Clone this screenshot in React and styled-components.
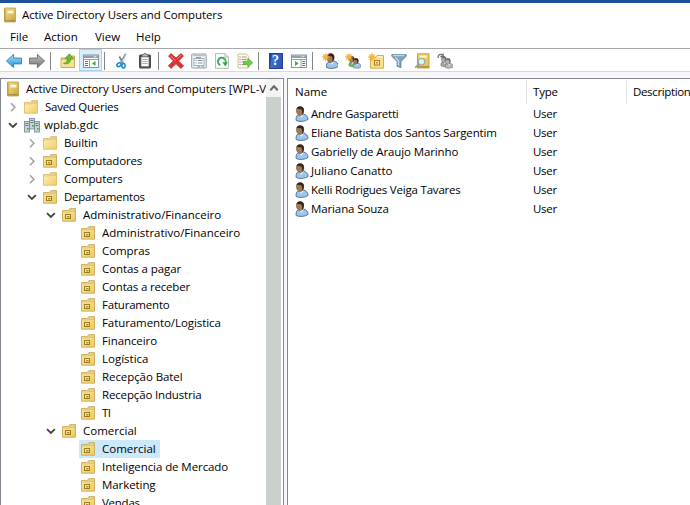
import React from 'react';
import styled, { createGlobalStyle, css } from 'styled-components';

const GlobalStyle = createGlobalStyle`
  * { box-sizing: border-box; }
  html, body { margin: 0; overflow: hidden; background: #fff; }
`;

const Window = styled.div`
  display: flex;
  flex-direction: column;
  width: 690px;
  height: 505px;
  overflow: hidden;
  background: #f7f7f9;
  border-top: 3px solid #1d519b;
  color: #000;
  font: 11.5px/18px 'Open Sans', 'Noto Sans', sans-serif;
  white-space: nowrap;
`;

const TitleBar = styled.header`
  display: flex;
  align-items: center;
  gap: 6px;
  flex: none;
  height: 24px;
  padding-left: 4px;
  background: #fff;
`;

const MenuBar = styled.nav`
  display: flex;
  flex: none;
  height: 21px;
  padding-left: 10px;
  line-height: 20px;
  background: #fff;
`;

const MenuItem = styled.span`
  flex: none;
  width: ${(p) => p.$width}px;
`;

const Toolbar = styled.div`
  display: flex;
  flex: none;
  height: 24px;
  padding-left: 2px;
  border-top: 1px solid #a5a9ab;
  border-bottom: 1px solid #d6dade;
  background: #fff;
`;

const ToolButton = styled.span`
  display: flex;
  align-items: center;
  justify-content: center;
  flex: none;
  width: 23px;
  height: 22px;
  padding-top: 2px;
  ${(p) =>
    p.$active &&
    css`
      background: #d9edfb;
      border: 1px solid #a5d3f1;
    `}
`;

const Separator = styled.span`
  flex: none;
  width: 1px;
  height: 18px;
  margin: 3px 5px 0 2px;
  background: #858585;
`;

const Panes = styled.main`
  display: flex;
  gap: 3px;
  flex: 1;
  min-height: 0;
  padding-top: 6px;
`;

const Pane = styled.section`
  display: flex;
  flex: ${(p) => (p.$width ? 'none' : '1')};
  width: ${(p) => (p.$width ? `${p.$width}px` : 'auto')};
  min-width: 0;
  overflow: hidden;
  background: #fff;
  border: 1px solid #828790;
  border-width: ${(p) => (p.$width ? '1px 1px 0 1px' : '1px 0 0 1px')};
`;

const Tree = styled.div`
  flex: 1;
  min-width: 0;
  overflow: hidden;
  padding-top: 1px;
`;

const TreeRow = styled.div`
  display: flex;
  align-items: center;
  height: 18px;
  padding-left: ${(p) => p.$indent}px;
`;

const Toggle = styled.span`
  display: flex;
  flex: none;
  width: 14px;
`;

const Node = styled.span`
  display: flex;
  align-items: center;
  flex: none;
  gap: ${(p) => p.$gap}px;
  height: 18px;
  padding: 0 4px 0 2px;
  background: ${(p) => (p.$selected ? '#cce8fb' : 'transparent')};
`;

const Text = styled.span`
  letter-spacing: ${(p) => p.$track ?? -0.08}px;
`;

const ScrollBar = styled.div`
  display: flex;
  flex-direction: column;
  flex: none;
  width: 17px;
  padding-right: 2px;
`;

const ScrollArrow = styled.div`
  display: flex;
  align-items: center;
  justify-content: center;
  height: 18px;
  background: #f3f3f3;
`;

const ScrollThumb = styled.div`
  flex: 1;
  background: #cbd0cd;
`;

const List = styled.div`
  flex: 1;
  min-width: 0;
`;

const HeaderRow = styled.div`
  display: grid;
  grid-template-columns: 239px 100px 120px;
  height: 25px;
  padding-top: 1px;
`;

const HeaderCell = styled.div`
  height: 24px;
  padding-left: ${(p) => p.$pad || 6}px;
  line-height: 24px;
  letter-spacing: ${(p) => p.$track || 0}px;
  border-right: 1px solid #e2e2e2;
`;

const ListRow = styled.div`
  display: grid;
  grid-template-columns: 239px 100px;
  height: 19px;
`;

const NameCell = styled.div`
  display: flex;
  align-items: center;
  gap: 2px;
  padding-left: 7px;
`;

const Cell = styled.div`
  padding-left: 6px;
  line-height: 19px;
  letter-spacing: -0.3px;
`;

const Icon = ({ w = 16, h = 16, children }) => (
  <svg width={w} height={h} viewBox={`0 0 ${w} ${h}`}>{children}</svg>
);

const ConsoleIcon = () => (
  <Icon w={12} h={16}>
    <defs>
      <linearGradient id="book" x1="0" y1="0" x2="1" y2="1">
        <stop offset="0" stopColor="#f6e08a" />
        <stop offset="1" stopColor="#c9a43c" />
      </linearGradient>
    </defs>
    <rect x=".4" y="1" width="11.200" height="14" rx=".6" fill="url(#book)" stroke="#b3923a" strokeWidth=".7" />
    <path d="M1 1.400v13.200" stroke="#a5842c" strokeWidth=".8" />
    <rect x="3.200" y="3.400" width="6.400" height="3.200" fill="#fffbe4" stroke="#e3ca70" strokeWidth=".5" />
    <path d="M1.500 13.700h9.500" stroke="#96782a" strokeWidth=".8" />
  </Icon>
);

const FolderIcon = ({ unit }) => (
  <Icon w={14} h={14}>
    <defs>
      <linearGradient id="folder" x1="0" y1="0" x2="1" y2="1">
        <stop offset="0" stopColor="#fff2bd" />
        <stop offset="1" stopColor="#f0cd68" />
      </linearGradient>
      <linearGradient id="unitFolder" x1="0" y1="0" x2="1" y2="1">
        <stop offset="0" stopColor="#fbe9a4" />
        <stop offset="1" stopColor="#ecc95f" />
      </linearGradient>
    </defs>
    <path
      d="M.5 2.500h5.800L7.800.6h5.700v12.600H.5z"
      fill={unit ? 'url(#unitFolder)' : 'url(#folder)'}
      stroke={unit ? '#c6a34b' : '#dcb85a'}
      strokeWidth=".8"
    />
    <path d="M7.900 1.500h4.800v1.200H7.900z" fill="#fffdf2" stroke="#b99f58" strokeWidth=".4" />
    <path d="M.6 3.900h6.200l1.300-.8h5" fill="none" stroke="#cba64c" strokeWidth=".5" />
    {unit && (
      <g>
        <rect x="3.500" y="6.500" width="5" height="4" fill="#f9e5a0" stroke="#9c7b22" />
        <path d="M5 8h2.500v1.500H5z" fill="#b3902f" />
      </g>
    )}
  </Icon>
);

const DomainIcon = () => (
  <Icon w={16} h={15}>
    {[[5.5, 0], [0.5, 3], [10.5, 3]].map(([x, y]) => (
      <g key={x}>
        <rect x={x} y={y + 0.5} width="5" height="10.500" fill="#c7d3d9" stroke="#71838f" strokeWidth=".8" />
        <path d={`M${x + 1} ${y + 2.5}h3M${x + 1} ${y + 4.5}h3`} stroke="#536874" strokeWidth=".8" />
        <rect x={x + 2.500} y={y + 7} width="1.800" height="1.800" fill="#45b944" />
      </g>
    ))}
  </Icon>
);

const Person = ({
  x = 0, y = 0, s = 1,
  body = '#9cc6ea', line = '#44688c', skin = '#a27a58', hair = '#33261f',
}) => (
  <g transform={`translate(${x} ${y}) scale(${s})`}>
    <path d="M1.200 14.500c-.5-2.700.2-5 2.300-5.700l5-.8c2.800.6 4.500 2.800 4.600 5.300-2.600 2.300-9 2.800-11.900 1.200z" fill={body} stroke={line} strokeWidth=".9" />
    <path d="M4.200 8.800l2.200 2.900L8.800 8.400z" fill="#edf6fd" />
    <path d="M1.400 4.500c0-2.600 1.500-3.900 3.700-3.900 2.500 0 3.700 1.600 3.500 4.300-.1 2.700-1.400 4.600-3.200 4.600-2.300 0-4-2.200-4-5z" fill={skin} stroke="#5d4230" strokeWidth=".5" />
    <path d="M1.600 2.800C2.200 1 3.800.3 5.500.4 8.400.6 9.300 2.800 8.800 5.500 8.500 7.200 8 8.200 7.100 8.800c.3-2.200.2-4.200-.9-5.600-1.500.2-3-.3-4.600-.4z" fill={hair} />
  </g>
);

const UserIcon = () => <Icon w={14} h={16}><Person /></Icon>;

const Chevron = ({ open }) => (
  <Icon w={10} h={10}>
    {open
      ? <path d="M1 3.200l3.900 3.700 3.900-3.700" fill="none" stroke="#424242" strokeWidth="1.800" />
      : <path d="M3 1.200l3.900 4L3 9.200" fill="none" stroke="#a0a0a0" strokeWidth="1.500" />}
  </Icon>
);

const Arrow = ({ back }) => (
  <Icon>
    <defs>
      <linearGradient id={back ? 'arrowBack' : 'arrowForward'} x1="0" y1="0" x2="0" y2="1">
        <stop offset="0" stopColor={back ? '#b4e2fa' : '#c2c2c2'} />
        <stop offset="1" stopColor={back ? '#1691d8' : '#747474'} />
      </linearGradient>
    </defs>
    <path
      d={back ? 'M.4 8l7.200-6.600v3.700h8v5.800h-8v3.700z' : 'M15.600 8L8.400 1.400v3.700h-8v5.800h8v3.700z'}
      fill={back ? 'url(#arrowBack)' : 'url(#arrowForward)'}
      stroke={back ? '#2b7fb4' : '#666'}
      strokeWidth=".9"
    />
  </Icon>
);

const UpFolderIcon = () => (
  <Icon>
    <path d="M1 5h5l1.500-2h7v11.500H1z" fill="#eecb66" stroke="#c39a38" strokeWidth=".8" />
    <path d="M1.400 7h12.700v7H1.400z" fill="#f7e194" />
    <path d="M3.500 10.500c2.700-.4 3.900-2 4-4.700H5L9.400.8l4 5h-2.700c0 3.700-2.500 5.900-7.200 4.700z" fill="#69bd35" stroke="#3c8c20" strokeWidth=".6" />
  </Icon>
);

const PaneIcon = ({ flip }) => (
  <Icon>
    <rect x=".5" y="2" width="15" height="12.500" fill="#fff" stroke="#788b98" strokeWidth=".9" />
    <path d="M1 2.500h14v2.500H1z" fill="#8fa2ae" />
    <path d="M10.500 3.700h3.500" stroke="#fff" strokeDasharray="1 .7" />
    <path d={flip ? 'M1 6.500h14M10 6.500v8' : 'M1 6.500h14M6.500 6.500v8'} stroke="#788b98" strokeWidth=".8" />
    <path d={flip ? 'M11.300 8.500h3M11.300 10.500h3M11.300 12.500h3' : 'M2 8.500h3M2 10.500h3M2 12.500h3'} stroke="#4e7694" />
    <path d={flip ? 'M4 8l3.600 2.500L4 13z' : 'M12.500 8L9 10.500l3.500 2.500z'} fill="#35ae35" />
  </Icon>
);

const CutIcon = () => (
  <Icon>
    <path d="M11.800.8L7 9.500M5.300 3.500L9 10" stroke="#70899b" strokeWidth="1.800" />
    <path d="M12.200 1L7.700 9" stroke="#d5e2e9" strokeWidth=".7" />
    <ellipse cx="5" cy="11.700" rx="2.300" ry="1.700" transform="rotate(-35 5 11.700)" fill="none" stroke="#1786cb" strokeWidth="1.500" />
    <ellipse cx="9.500" cy="12.700" rx="1.600" ry="2.200" fill="none" stroke="#1786cb" strokeWidth="1.500" />
  </Icon>
);

const PasteIcon = () => (
  <Icon>
    <rect x="2.500" y="2" width="11" height="13" rx=".6" fill="#555" stroke="#4a4a4a" />
    <path d="M4.300 4h7.400v9.300H4.300z" fill="#fafafa" />
    <path d="M5.300 6.500h5.400M5.300 8.500h5.400M5.300 10.500h5.400" stroke="#aaa" />
    <path d="M5 3.800V1.700h1.500L7 .6h2l.6 1.100H11v2.100z" fill="#bdbdbd" stroke="#555" strokeWidth=".7" />
  </Icon>
);

const DeleteIcon = () => (
  <Icon>
    <path d="M.5 3L3 .6l5 4.300L13 .6 15.500 3l-4.900 4.900 5 5-2.700 2.500L8 10.800l-5 4.600-2.600-2.700 5-4.800z" fill="#dc3432" stroke="#b52423" strokeWidth=".7" />
    <path d="M2.300 2.800l5.500 4.800M13 2.200L9 6" stroke="#f59086" strokeWidth=".9" />
  </Icon>
);

const PropertiesIcon = () => (
  <Icon>
    <rect x=".7" y="1" width="14.500" height="14" rx=".8" fill="#f3f5f6" stroke="#88949c" strokeWidth=".9" />
    <path d="M2 2.700h12" stroke="#a6b2ba" />
    <rect x="3" y="5.500" width="10" height="7" fill="#fff" stroke="#8d9ba5" strokeWidth=".8" />
    <path d="M5 4.500h5" stroke="#8d9ba5" />
    <path d="M4.500 7.500h1M4.500 10h1" stroke="#3c96cb" strokeWidth="1.200" />
    <path d="M6.700 7.500h5M6.700 10h5" stroke="#8796a0" />
    <path d="M6.500 13.800h2.500" stroke="#43b4df" />
    <path d="M10.500 13.800h2.500" stroke="#8796a0" />
  </Icon>
);

const RefreshIcon = () => (
  <Icon>
    <path d="M1.500.6h9.600l3.300 3.300v11.500H1.500z" fill="#fbfcfb" stroke="#a7a99a" strokeWidth=".8" />
    <path d="M11 .8v3.300h3.200" fill="#e0dfca" stroke="#9c9f8d" strokeWidth=".6" />
    <path d="M6.300 12.200a3.900 3.900 0 1 1 5.200-2.200" fill="none" stroke="#43ae62" strokeWidth="2" />
    <path d="M8.300 9.200h5.600l-2.500 4.300z" fill="#36a253" />
  </Icon>
);

const ExportIcon = () => (
  <Icon>
    <path d="M1 1h8.500l2.200 2.300V15H1z" fill="#fffdec" stroke="#c2b583" strokeWidth=".8" />
    <path d="M2.500 4h1M2.500 6.500h1M2.500 9h1M2.500 11.500h1" stroke="#666" />
    <path d="M4.700 4h5M4.700 6.500h5M4.700 9h3M4.700 11.500h4" stroke="#a69e78" />
    <path d="M6.500 8.200h4.300V5.300l5 4.500-5 4.500v-2.800H6.500z" fill="#6ecb48" stroke="#4aa030" strokeWidth=".6" />
  </Icon>
);

const HelpBox = styled.span`
  width: 14px;
  height: 16px;
  background: linear-gradient(100deg, #234dae 0 12%, #4272cf 20%, #2854ba);
  border: 1px solid #203f91;
  color: #fff;
  font: bold 14px/14px 'Liberation Serif', serif;
  text-align: center;
`;

const Spark = ({ x = 4.5, y = 4 }) => (
  <path
    transform={`translate(${x} ${y})`}
    d="M0-4L.9-1.500 3.200-3 1.700-.7 4.200.2 1.700.9 2.900 3.200.7 1.700-.2 4.200-.9 1.700-3 3l1.300-2.300L-4.200 0l2.500-.9L-3-3l2.200 1.400z"
    fill="#f8b637"
    stroke="#e49a28"
    strokeWidth=".3"
  />
);

const NewUserIcon = () => (
  <Icon><Person x={3.4} s={1} /><Spark x={3.8} /></Icon>
);

const NewGroupIcon = () => (
  <Icon>
    <Person x={3.2} y={3} s={0.68} body="#75ba65" line="#41783c" />
    <Person x={7.6} y={5} s={0.66} />
    <Spark x={4} />
  </Icon>
);

const NewUnitIcon = () => (
  <Icon>
    <path d="M2.500 4.500h5l1.500-2h6.500v12.700h-13z" fill="#f8df8e" stroke="#cfa743" strokeWidth=".9" />
    <path d="M9.500 3.800h5" stroke="#fffaea" />
    <rect x="6.500" y="7.500" width="5" height="4.500" fill="#fae7a3" stroke="#a37e20" />
    <path d="M8 9h2v1.500H8z" fill="#b98d24" />
    <Spark x={4} />
  </Icon>
);

const FilterIcon = () => (
  <Icon>
    <path d="M.8 1.700h14.400v1.600L9.900 8.500v6.200l-3.800-1.500V8.500L.8 3.300z" fill="#7ea4bd" stroke="#4f7691" strokeWidth=".8" />
    <path d="M2 2.700h11.500" stroke="#d3e5ef" />
    <path d="M4.500 4.500L7.500 8v4.500" fill="none" stroke="#c7dfed" strokeWidth="1.300" />
  </Icon>
);

const FindIcon = () => (
  <Icon>
    <rect x="3.500" y=".8" width="11.500" height="14.200" fill="#e9ca5c" stroke="#b5963c" strokeWidth=".8" />
    <path d="M5.500 2.500h7.500v2.300H5.500z" fill="#fff4c4" />
    <path d="M4 13.900h11" stroke="#9b7719" />
    <circle cx="7.500" cy="8.700" r="3.300" fill="#e0f1f7" stroke="#8b9fa8" />
    <path d="M5 11.300L1.200 14.600" stroke="#9a9a8a" strokeWidth="1.800" />
  </Icon>
);

const MembersIcon = () => (
  <Icon>
    <Person x={3.2} y={3} s={0.68} body="#a4a4a4" line="#666" skin="#aaa" hair="#707070" />
    <Person x={7.6} y={5} s={0.66} body="#b9b9b9" line="#666" skin="#b4b4b4" hair="#707070" />
    <path d="M1.200 5C.7 1.700 3.500.2 5.700 2.200M6.200.4v3H3.300" fill="none" stroke="#6d6d6d" strokeWidth="1.200" />
  </Icon>
);

const TOOL_GROUPS = [
  [<Arrow back />, <Arrow />],
  [<UpFolderIcon />, <PaneIcon />],
  [<CutIcon />, <PasteIcon />],
  [<DeleteIcon />, <PropertiesIcon />, <RefreshIcon />, <ExportIcon />],
  [<HelpBox>?</HelpBox>, <PaneIcon flip />],
  [<NewUserIcon />, <NewGroupIcon />, <NewUnitIcon />, <FilterIcon />, <FindIcon />, <MembersIcon />],
];

const TREE = [
  { label: 'Saved Queries', depth: 0, open: false, kind: 'folder', track: -0.26 },
  { label: 'wplab.gdc', depth: 0, open: true, kind: 'domain', track: 0.05 },
  { label: 'Builtin', depth: 1, open: false, kind: 'folder' },
  { label: 'Computadores', depth: 1, open: false, track: -0.15 },
  { label: 'Computers', depth: 1, open: false, kind: 'folder', track: -0.12 },
  { label: 'Departamentos', depth: 1, open: true, track: -0.25 },
  { label: 'Administrativo/Financeiro', depth: 2, open: true, track: 0 },
  { label: 'Administrativo/Financeiro', depth: 3, track: 0 },
  { label: 'Compras', depth: 3 },
  { label: 'Contas a pagar', depth: 3 },
  { label: 'Contas a receber', depth: 3, track: -0.18 },
  { label: 'Faturamento', depth: 3, track: -0.2 },
  { label: 'Faturamento/Logistica', depth: 3 },
  { label: 'Financeiro', depth: 3 },
  { label: 'Logística', depth: 3, track: 0 },
  { label: 'Recepção Batel', depth: 3 },
  { label: 'Recepção Industria', depth: 3, track: -0.15 },
  { label: 'TI', depth: 3, track: -0.5 },
  { label: 'Comercial', depth: 2, open: true, track: 0 },
  { label: 'Comercial', depth: 3, selected: true, track: 0 },
  { label: 'Inteligencia de Mercado', depth: 3 },
  { label: 'Marketing', depth: 3 },
  { label: 'Vendas', depth: 3, track: -0.25 },
];

const USERS = [
  { name: 'Andre Gasparetti', track: -0.25 },
  { name: 'Eliane Batista dos Santos Sargentim', track: -0.16 },
  { name: 'Gabrielly de Araujo Marinho', track: -0.12 },
  { name: 'Juliano Canatto', track: 0 },
  { name: 'Kelli Rodrigues Veiga Tavares', track: -0.2 },
  { name: 'Mariana Souza', track: -0.12 },
];

const nodeIcon = (kind) =>
  kind === 'domain' ? <DomainIcon /> : <FolderIcon unit={kind !== 'folder'} />;

export default function App() {
  return (
    <Window>
      <GlobalStyle />
      <TitleBar>
        <ConsoleIcon />
        <Text $track={-0.1}>Active Directory Users and Computers</Text>
      </TitleBar>
      <MenuBar>
        <MenuItem $width={34}>File</MenuItem>
        <MenuItem $width={51}>Action</MenuItem>
        <MenuItem $width={41}>View</MenuItem>
        <MenuItem $width={40}>Help</MenuItem>
      </MenuBar>
      <Toolbar>
        {TOOL_GROUPS.map((group, g) => (
          <React.Fragment key={g}>
            {g > 0 && <Separator />}
            {group.map((icon, i) => (
              <ToolButton key={i} $active={g === 1 && i === 1}>{icon}</ToolButton>
            ))}
          </React.Fragment>
        ))}
      </Toolbar>
      <Panes>
        <Pane $width={284}>
          <Tree>
            <TreeRow $indent={4}>
              <Node $gap={7}>
                <ConsoleIcon />
                <Text $track={-0.11}>Active Directory Users and Computers [WPL-V</Text>
              </Node>
            </TreeRow>
            {TREE.map((n, i) => (
              <TreeRow key={i} $indent={7 + n.depth * 19}>
                <Toggle>{n.open !== undefined && <Chevron open={n.open} />}</Toggle>
                <Node $selected={n.selected} $gap={n.kind === 'domain' ? 4 : 7}>
                  {nodeIcon(n.kind)}
                  <Text $track={n.track}>{n.label}</Text>
                </Node>
              </TreeRow>
            ))}
          </Tree>
          <ScrollBar>
            <ScrollArrow>
              <Icon w={10} h={8}><path d="M1.300 6.200L5 2.200l3.700 4" fill="none" stroke="#666" strokeWidth="2" /></Icon>
            </ScrollArrow>
            <ScrollThumb />
          </ScrollBar>
        </Pane>
        <Pane>
          <List>
            <HeaderRow>
              <HeaderCell $pad={7}>Name</HeaderCell>
              <HeaderCell $track={-0.2}>Type</HeaderCell>
              <HeaderCell $track={-0.35}>Description</HeaderCell>
            </HeaderRow>
            {USERS.map(({ name, track }) => (
              <ListRow key={name}>
                <NameCell><UserIcon /><Text $track={track}>{name}</Text></NameCell>
                <Cell>User</Cell>
              </ListRow>
            ))}
          </List>
        </Pane>
      </Panes>
    </Window>
  );
}
